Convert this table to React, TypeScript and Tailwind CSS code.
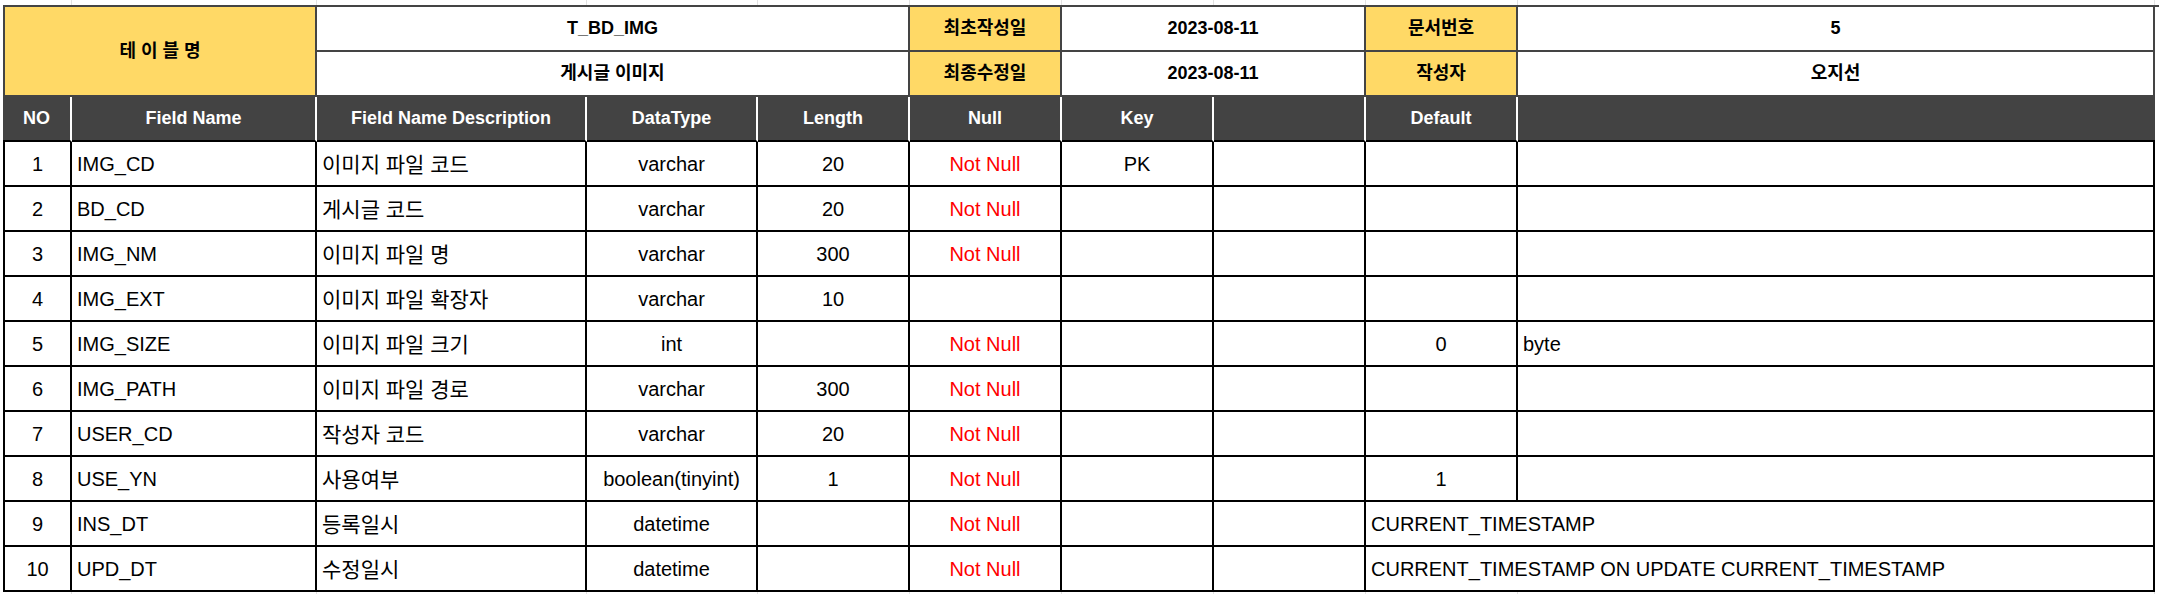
const COLS = "grid-cols-[69px_245px_270px_171px_152px_152px_152px_152px_152px_637px]";

type Field = {
  no: number;
  name: string;
  desc: string;
  type: string;
  length: string;
  notNull: boolean;
  key?: string;
  def?: string;
  note?: string;
  wide?: string;
};

const fields: Field[] = [
  { no: 1, name: "IMG_CD", desc: "이미지 파일 코드", type: "varchar", length: "20", notNull: true, key: "PK" },
  { no: 2, name: "BD_CD", desc: "게시글 코드", type: "varchar", length: "20", notNull: true },
  { no: 3, name: "IMG_NM", desc: "이미지 파일 명", type: "varchar", length: "300", notNull: true },
  { no: 4, name: "IMG_EXT", desc: "이미지 파일 확장자", type: "varchar", length: "10", notNull: false },
  { no: 5, name: "IMG_SIZE", desc: "이미지 파일 크기", type: "int", length: "", notNull: true, def: "0", note: "byte" },
  { no: 6, name: "IMG_PATH", desc: "이미지 파일 경로", type: "varchar", length: "300", notNull: true },
  { no: 7, name: "USER_CD", desc: "작성자 코드", type: "varchar", length: "20", notNull: true },
  { no: 8, name: "USE_YN", desc: "사용여부", type: "boolean(tinyint)", length: "1", notNull: true, def: "1" },
  { no: 9, name: "INS_DT", desc: "등록일시", type: "datetime", length: "", notNull: true, wide: "CURRENT_TIMESTAMP" },
  {
    no: 10,
    name: "UPD_DT",
    desc: "수정일시",
    type: "datetime",
    length: "",
    notNull: true,
    wide: "CURRENT_TIMESTAMP ON UPDATE CURRENT_TIMESTAMP",
  },
];

// top block (table name / dates / doc info)
function Meta({ children, yellow, className = "" }: { children?: React.ReactNode; yellow?: boolean; className?: string }) {
  return (
    <div
      className={`flex items-center justify-center border-r-2 border-b-2 border-[#444] text-[18px] font-bold text-black ${
        yellow ? "bg-[#ffd966]" : "bg-white"
      } ${className}`}
    >
      {children}
    </div>
  );
}

function Head({ children, last }: { children?: React.ReactNode; last?: boolean }) {
  return (
    <div
      className={`flex items-center justify-center border-b-2 border-black bg-[#434343] text-[18px] font-bold text-white ${
        last ? "" : "border-r-2 border-r-white"
      }`}
    >
      {children}
    </div>
  );
}

function Cell({
  children,
  left,
  red,
  ko,
  className = "",
}: {
  children?: React.ReactNode;
  left?: boolean;
  red?: boolean;
  ko?: boolean;
  className?: string;
}) {
  return (
    <div
      className={`flex items-center border-r-2 border-b-2 border-black bg-white whitespace-nowrap ${
        left ? "justify-start pl-[5px]" : "justify-center"
      } ${red ? "text-[#ff0000]" : "text-black"} ${ko ? "pt-[2px] text-[21px]" : "text-[20px]"} ${className}`}
    >
      {children}
    </div>
  );
}

function GridStrip({ className = "" }: { className?: string }) {
  return (
    <div className={`grid ${COLS} ${className}`}>
      {Array.from({ length: 10 }).map((_, i) => (
        <div key={i} className="border-r border-[#e2e2e2]" />
      ))}
    </div>
  );
}

export default function App() {
  return (
    <div className="h-[594px] w-[2159px] overflow-hidden bg-white pl-[3px] font-['Liberation_Sans','Noto_Sans_CJK_KR',sans-serif]">
      <GridStrip className="h-[5px]" />
      <div className={`grid ${COLS} auto-rows-[45px] border-t-2 border-[#444]`}>
        <Meta yellow className="col-span-2 row-span-2 border-l-2">
          테 이 블 명
        </Meta>
        <Meta className="col-span-3">T_BD_IMG</Meta>
        <Meta yellow>최초작성일</Meta>
        <Meta className="col-span-2">2023-08-11</Meta>
        <Meta yellow>문서번호</Meta>
        <Meta>5</Meta>

        <Meta className="col-span-3">게시글 이미지</Meta>
        <Meta yellow>최종수정일</Meta>
        <Meta className="col-span-2">2023-08-11</Meta>
        <Meta yellow>작성자</Meta>
        <Meta>오지선</Meta>

        <Head>NO</Head>
        <Head>Field Name</Head>
        <Head>Field Name Description</Head>
        <Head>DataType</Head>
        <Head>Length</Head>
        <Head>Null</Head>
        <Head>Key</Head>
        <Head />
        <Head>Default</Head>
        <Head last />

        {fields.map((f) => (
          <div key={f.no} className="contents">
            <Cell className="border-l-2">{f.no}</Cell>
            <Cell left>{f.name}</Cell>
            <Cell left ko>
              {f.desc}
            </Cell>
            <Cell>{f.type}</Cell>
            <Cell>{f.length}</Cell>
            <Cell red>{f.notNull ? "Not Null" : ""}</Cell>
            <Cell>{f.key}</Cell>
            <Cell />
            {f.wide ? (
              <Cell left className="col-span-2">
                {f.wide}
              </Cell>
            ) : (
              <>
                <Cell>{f.def}</Cell>
                <Cell left>{f.note}</Cell>
              </>
            )}
          </div>
        ))}
      </div>
      <GridStrip className="h-[4px]" />
    </div>
  );
}
